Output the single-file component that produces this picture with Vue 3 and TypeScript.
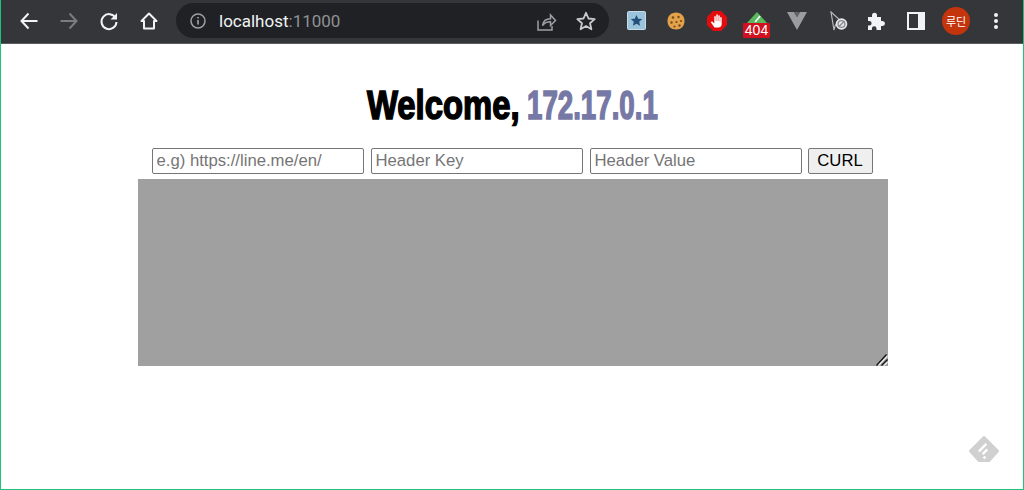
<script setup lang="ts">
const title = 'Welcome,'
const ip = '172.17.0.1'
</script>

<template>
  <div class="window">
    <header class="toolbar">
      <div class="nav">
        <svg class="ic" viewBox="0 0 24 24" width="24" height="24"><path d="M20.500 12H5M11.500 4.500L4.500 12l7 7.500" fill="none" stroke="#f1f3f4" stroke-width="2"/></svg>
        <svg class="ic" viewBox="0 0 24 24" width="24" height="24"><path d="M3.500 12H19M12.500 4.500l7 7.500-7 7.500" fill="none" stroke="#7a7c7f" stroke-width="2"/></svg>
        <svg class="ic" viewBox="0 0 24 24" width="24" height="24"><path d="M18.600 9A7.500 7.500 0 1 0 19.500 13" fill="none" stroke="#f1f3f4" stroke-width="2"/><path d="M20 4v6.500h-6.500z" fill="#f1f3f4"/></svg>
        <svg class="ic" viewBox="0 0 24 24" width="24" height="24"><path d="M12 4.500L4.500 12H7v7.500h10V12h2.500z" fill="none" stroke="#f1f3f4" stroke-width="2" stroke-linejoin="round"/></svg>
      </div>
      <div class="omnibox">
        <svg viewBox="0 0 16 16" width="16" height="16"><circle cx="8" cy="8" r="7" fill="none" stroke="#9aa0a6" stroke-width="1.500"/><path d="M8 7v4.600M8 4v1.600" stroke="#9aa0a6" stroke-width="1.700"/></svg>
        <span class="url"><span class="host">localhost</span><span class="port">:11000</span></span>
        <span class="spacer"></span>
        <svg viewBox="0 0 22 22" width="22" height="22"><path d="M3 10.500V20h14v-4M7.500 15.500c.6-4.300 3.800-6.800 8-6.800V5l5 5.500-5 5v-3.700c-3.400 0-6 1-8 3.700z" fill="none" stroke="#9aa0a6" stroke-width="1.500"/></svg>
        <svg class="star" viewBox="0 0 22 22" width="22" height="22"><path d="M11 2.800l2.500 5.700 6.200.6-4.700 4.100 1.400 6.100L11 16.100l-5.400 3.200L7 13.200 2.300 9.100l6.200-.6z" fill="none" stroke="#c8cacd" stroke-width="1.800" stroke-linejoin="round"/></svg>
      </div>
      <div class="exts">
        <svg class="e1" viewBox="0 0 20 20" width="20" height="20"><rect x=".5" y=".5" width="18" height="18" rx="1" fill="#9cc3dc" stroke="#c5dceb"/><path d="M9.500 4l1.700 3.700 4 .4-3 2.700.9 4-3.600-2-3.600 2 .9-4-3-2.700 4-.4z" fill="#244f78"/></svg>
        <svg class="e2" viewBox="0 0 18 18" width="18" height="18"><path d="M9 .5c5 0 8.500 3.500 8.500 8.500 0 5-3.500 8.500-8.500 8.500S.5 14 .5 9 4 .5 9 .5z" fill="#e2a24a"/><circle cx="6" cy="5.500" r="1.300" fill="#7a4a1c"/><circle cx="11.500" cy="5" r="1.200" fill="#7a4a1c"/><circle cx="14" cy="9" r="1.100" fill="#7a4a1c"/><circle cx="4.500" cy="10.500" r="1.200" fill="#7a4a1c"/><circle cx="9.500" cy="10" r="1.100" fill="#7a4a1c"/><circle cx="12.500" cy="13.500" r="1.200" fill="#7a4a1c"/><circle cx="7.500" cy="14.500" r="1.100" fill="#7a4a1c"/></svg>
        <svg class="e3" viewBox="0 0 20 20" width="20" height="20"><path d="M6 0h8l6 6v8l-6 6H6l-6-6V6z" fill="#e40c0c"/><path d="M7.500 16.500L3.800 11.200l1.200-1 2.300 2.200V5.500a.8.800 0 0 1 1.500 0V10h.5V3.800a.8.800 0 0 1 1.500 0V10h.5V4.800a.8.800 0 0 1 1.500 0V10.500h.4V6.500a.8.800 0 0 1 1.500 0V13c0 2-1.300 3.500-3.200 3.500z" fill="#fff"/></svg>
        <div class="badge-ext">
          <svg viewBox="0 0 20 11" width="20" height="11"><path d="M10 0L20 11H0z" fill="#5cb85c"/><path d="M7.500 9.500l5-6 1.200 1-5 6z" fill="#fff"/></svg>
          <span class="badge">404</span>
        </div>
        <svg class="e5" viewBox="0 0 20 18" width="20" height="18"><path d="M0 0h7l3 5 3-5h7L10 18z" fill="#9a9c9f"/><path d="M7 0h6l-3 5z" fill="#636568"/></svg>
        <svg class="e6" viewBox="0 0 20 20" width="20" height="20"><path d="M2 1l10 9-3 .5-3 4.500-1 4z" fill="#35363a" stroke="#b5b7ba" stroke-width="1.200"/><circle cx="12.500" cy="13" r="5.800" fill="#e8e8e8"/><circle cx="12.500" cy="13" r="3.400" fill="none" stroke="#8a8c8f" stroke-width="1.400"/><path d="M10 15.500l5-5" stroke="#8a8c8f" stroke-width="1.400"/></svg>
        <svg class="e7" viewBox="0 0 18 18" width="18" height="18"><path d="M0 5h4V3.200a2.500 2.500 0 0 1 5 0V5h4v4h1.500a2.500 2.500 0 0 1 0 5H13v4H8.500v-1.500a2.300 2.300 0 0 0-4.600 0V18H0v-4.500h1.300a2.300 2.300 0 0 0 0-4.600H0z" fill="#f1f3f4"/></svg>
        <svg class="e8" viewBox="0 0 18 18" width="18" height="18"><path d="M1 1h16v16H1z" fill="none" stroke="#f1f3f4" stroke-width="2"/><path d="M11 1h6v16h-6z" fill="#f1f3f4"/></svg>
        <span class="avatar">루딘</span>
        <svg class="e9" viewBox="0 0 6 20" width="6" height="20"><circle cx="3" cy="4" r="2" fill="#f1f3f4"/><circle cx="3" cy="10" r="2" fill="#f1f3f4"/><circle cx="3" cy="16" r="2" fill="#f1f3f4"/></svg>
      </div>
    </header>

    <main class="page">
      <h1 class="title">
        <span class="word welcome"><span class="ink">{{ title }}</span></span>
        <span class="word ip"><span class="ink">{{ ip }}</span></span>
      </h1>
      <form class="form" @submit.prevent>
        <input class="field" type="text" placeholder="e.g) https://line.me/en/" />
        <input class="field" type="text" placeholder="Header Key" />
        <input class="field" type="text" placeholder="Header Value" />
        <button class="btn" type="button">CURL</button>
      </form>
      <div class="output-wrap">
        <textarea class="output"></textarea>
        <svg class="grip" viewBox="0 0 12 12" width="12" height="12"><path d="M.5 11.500L10.500.5" stroke="#111" stroke-width="1.300"/><path d="M2.500 11.500L11.500 2" stroke="#eee" stroke-width="1.200"/><path d="M5.500 11.500l6-6" stroke="#111" stroke-width="1.300"/><path d="M8 11.500l3.500-3.500" stroke="#eee" stroke-width="1.200"/></svg>
      </div>
      <svg class="feedly" viewBox="0 0 32 32" width="32" height="32"><path d="M16 2.500L29.500 16 21 25.500H11L2.500 16z" fill="#d0d0d0" stroke="#d0d0d0" stroke-width="3" stroke-linejoin="round"/><path d="M17.500 8l1.700 1.700-7.500 7.500-1.700-1.700z M18.500 13.500l1.700 1.700-4.700 4.700-1.700-1.700z M16.500 20.700l1.800 1.800-1.800 1.800-1.800-1.800z" fill="#fff"/></svg>
    </main>
  </div>
</template>

<style>
html, body { margin: 0; background: #fff; }
</style>

<style scoped>
.window {
  width: 1024px;
  height: 490px;
  box-sizing: border-box;
  border: 1px solid #1fc27b;
  border-top: 0;
  display: flex;
  flex-direction: column;
  overflow: hidden;
  font-family: "Liberation Sans", Arial, sans-serif;
}
.toolbar {
  height: 44px;
  box-sizing: border-box;
  flex: none;
  background: #35363a;
  border-bottom: 1px solid #5a5b5e;
  display: flex;
  align-items: center;
  padding: 0 0 2px 15.500px;
}
.nav { display: flex; gap: 16px; align-items: center; }
.ic { display: block; }
.omnibox {
  margin-left: 15.500px;
  width: 433px;
  height: 35px;
  flex: none;
  box-sizing: border-box;
  border-radius: 18px;
  background: #202124;
  display: flex;
  align-items: center;
  padding: 0 12px 0 14px;
}
.url { margin-left: 13px; font-family: "Roboto", sans-serif; font-size: 17px; }
.host { color: #f1f3f4; }
.port { color: #8f9295; }
.spacer { flex: 1; }
.star { margin-left: 18px; }
.exts {
  display: flex;
  align-items: center;
  height: 100%;
}
.exts > * { flex: none; }
.e1 { margin-left: 18px; }
.e2 { margin-left: 20px; }
.e3 { margin-left: 22px; }
.badge-ext {
  margin-left: 16px;
  margin-top: 12px;
  align-self: flex-start;
  width: 27px;
  height: 26px;
  position: relative;
  display: flex;
  justify-content: center;
}
.badge-ext svg { display: block; }
.badge {
  position: absolute;
  left: 0;
  top: 11px;
  width: 27px;
  height: 15px;
  border-radius: 1px;
  background: #d3101f;
  color: #fff;
  font-size: 14px;
  line-height: 15px;
  text-align: center;
}
.e5 { margin-left: 17px; }
.e6 { margin-left: 22px; }
.e7 { margin-left: 19px; }
.e8 { margin-left: 21px; }
.avatar {
  margin-left: 17px;
  width: 28px;
  height: 28px;
  border-radius: 50%;
  background: #c5350d;
  color: #fff;
  font-family: "Noto Sans CJK KR", sans-serif;
  font-size: 11px;
  line-height: 28px;
  text-align: center;
}
.e9 { margin-left: 23px; }
.page {
  flex: 1;
  position: relative;
  display: flex;
  flex-direction: column;
  align-items: center;
  background: #fff;
}
.title {
  margin: 36px 0 0 1px;
  height: 52px;
  display: flex;
  gap: 8px;
  font-family: "Liberation Sans", sans-serif;
  font-weight: 700;
  font-size: 41px;
  line-height: 50px;
  color: #000;
  white-space: nowrap;
}
.word { display: block; }
.ink {
  display: block;
  transform-origin: left center;
  -webkit-text-stroke: 1.600px currentColor;
}
.welcome { width: 152px; }
.welcome .ink { transform: scaleX(.8); }
.ip { width: 131px; color: #7678a6; }
.ip .ink { transform: scaleX(.675); }
.form {
  margin-top: 16px;
  display: flex;
  gap: 7px;
  align-items: center;
  height: 26px;
}
.field {
  width: 212px;
  height: 26px;
  box-sizing: border-box;
  padding: 0 4px 1px;
  border: 1px solid #767676;
  border-radius: 2px;
  font-family: "Liberation Sans", Arial, sans-serif;
  font-size: 16.700px;
  background: #fff;
}
.field::placeholder { color: #757575; }
.btn {
  margin-left: -1px;
  width: 65px;
  height: 26px;
  box-sizing: border-box;
  padding: 0 0 1px;
  border: 1px solid #767676;
  border-radius: 2px;
  background: #efefef;
  color: #000;
  font-family: "Liberation Sans", Arial, sans-serif;
  font-size: 16.700px;
}
.output-wrap {
  position: relative;
  margin: 5px 0 0 1px;
  width: 750px;
  height: 187px;
}
.output {
  display: block;
  width: 100%;
  height: 100%;
  box-sizing: border-box;
  border: 0;
  padding: 0;
  resize: none;
  background: #a0a0a0;
}
.grip {
  position: absolute;
  right: 0;
  bottom: 0;
}
.feedly {
  position: absolute;
  left: 967px;
  top: 391px;
}
</style>
